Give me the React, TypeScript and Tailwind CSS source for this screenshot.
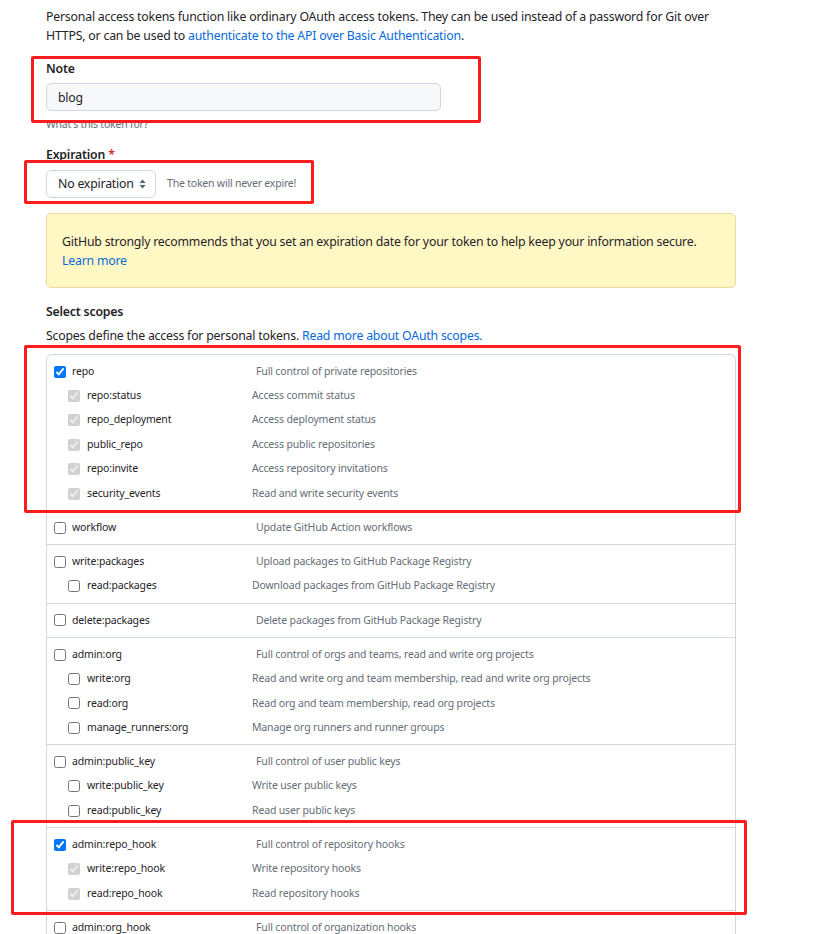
import React from 'react'

type Scope = { name: string; desc: string; checked?: boolean; subs?: { name: string; desc: string }[] }

const SCOPES: Scope[] = [
  {
    name: 'repo',
    desc: 'Full control of private repositories',
    checked: true,
    subs: [
      { name: 'repo:status', desc: 'Access commit status' },
      { name: 'repo_deployment', desc: 'Access deployment status' },
      { name: 'public_repo', desc: 'Access public repositories' },
      { name: 'repo:invite', desc: 'Access repository invitations' },
      { name: 'security_events', desc: 'Read and write security events' },
    ],
  },
  { name: 'workflow', desc: 'Update GitHub Action workflows' },
  {
    name: 'write:packages',
    desc: 'Upload packages to GitHub Package Registry',
    subs: [{ name: 'read:packages', desc: 'Download packages from GitHub Package Registry' }],
  },
  { name: 'delete:packages', desc: 'Delete packages from GitHub Package Registry' },
  {
    name: 'admin:org',
    desc: 'Full control of orgs and teams, read and write org projects',
    subs: [
      { name: 'write:org', desc: 'Read and write org and team membership, read and write org projects' },
      { name: 'read:org', desc: 'Read org and team membership, read org projects' },
      { name: 'manage_runners:org', desc: 'Manage org runners and runner groups' },
    ],
  },
  {
    name: 'admin:public_key',
    desc: 'Full control of user public keys',
    subs: [
      { name: 'write:public_key', desc: 'Write user public keys' },
      { name: 'read:public_key', desc: 'Read user public keys' },
    ],
  },
  {
    name: 'admin:repo_hook',
    desc: 'Full control of repository hooks',
    checked: true,
    subs: [
      { name: 'write:repo_hook', desc: 'Write repository hooks' },
      { name: 'read:repo_hook', desc: 'Read repository hooks' },
    ],
  },
  { name: 'admin:org_hook', desc: 'Full control of organization hooks' },
]

function ScopeGroup({ scope }: { scope: Scope }) {
  return (
    <div className="border-b border-[#d0d7de] py-[4.4px]">
      {/* parent scope */}
      <label className="flex h-[24.4px] items-center">
        <div className="flex w-[209px] shrink-0 items-center gap-[6px] pl-[7px]">
          <input type="checkbox" defaultChecked={scope.checked} className="m-0 h-[12px] w-[12px]" />
          <span className="text-[#1f2328]">{scope.name}</span>
        </div>
        <span className="text-[#656d76]">{scope.desc}</span>
      </label>

      {/* child scopes */}
      {scope.subs?.map((s) => (
        <label key={s.name} className="flex h-[24.4px] items-center">
          <div className="flex w-[205px] shrink-0 items-center gap-[7px] pl-[21px]">
            <input
              type="checkbox"
              defaultChecked={scope.checked}
              disabled={scope.checked}
              className="m-0 h-[12px] w-[12px]"
            />
            <span className="text-[#1f2328]">{s.name}</span>
          </div>
          <span className="text-[#656d76]">{s.desc}</span>
        </label>
      ))}
    </div>
  )
}

export default function App() {
  return (
    <div
      className="relative h-[934px] w-[828px] overflow-hidden bg-white pl-[46px] pt-[8px] text-[12.3px] tracking-[-0.2px] text-[#1f2328]"
      style={{ fontFamily: '"Noto Sans", "Open Sans", sans-serif' }}
    >
      <div className="w-[690px]">
        <p className="leading-[18.5px]">
          Personal access tokens function like ordinary OAuth access tokens. They can be used instead of a password for Git over
          HTTPS, or can be used to <a className="text-[#0969da]">authenticate to the API over Basic Authentication</a>.
        </p>

        {/* Note */}
        <div className="mt-[13.5px] font-semibold leading-[19px]">Note</div>
        <div className="mt-[5.5px] flex h-[28px] w-[395px] items-center rounded-[5px] border border-[#d0d7de] bg-[#f6f8fa] px-[11px] pt-[2px]">
          blog
        </div>
        <p className="mt-[5px] text-[10.5px] leading-[16px] text-[#656d76]">What's this token for?</p>

        {/* Expiration */}
        <div className="mt-[12.5px] font-semibold leading-[19px]">
          Expiration <span className="text-[#d1242f]">*</span>
        </div>
        <div className="mt-[6.5px] flex items-center gap-[11px]">
          <div className="flex h-[28px] w-[110px] items-center justify-between rounded-[5px] border border-[#d0d7de] bg-white pl-[11px] pr-[9px]">
            <span>No expiration</span>
            <svg width="7" height="10" viewBox="0 0 7 10" fill="#57606a">
              <path d="M3.5 0.5 L6.5 4 H0.5 Z" />
              <path d="M3.5 9.5 L6.5 6 H0.5 Z" />
            </svg>
          </div>
          <span className="text-[10.5px] text-[#656d76]">The token will never expire!</span>
        </div>

        {/* Warning flash */}
        <div className="mt-[15px] h-[75px] rounded-[5px] border border-[#eed9a0] bg-[#fff8c5] px-[15px] pt-[17.5px] leading-[19px]">
          <p>GitHub strongly recommends that you set an expiration date for your token to help keep your information secure.</p>
          <a className="text-[#0969da]">Learn more</a>
        </div>

        {/* Scopes */}
        <div className="mt-[13.5px] font-semibold leading-[19px]">Select scopes</div>
        <p className="mt-[5px] leading-[19px]">
          Scopes define the access for personal tokens. <a className="text-[#0969da]">Read more about OAuth scopes.</a>
        </p>

        <div className="mt-[9.5px] rounded-t-[6px] border-x border-t border-[#d0d7de] text-[10.5px] tracking-[-0.15px]">
          {SCOPES.map((s) => (
            <ScopeGroup key={s.name} scope={s} />
          ))}
        </div>
      </div>

      {/* red annotation frames */}
      <div className="absolute left-[31px] top-[56px] h-[67px] w-[450px] rounded-[2px] border-[3px] border-[#fb1d1d]" />
      <div className="absolute left-[24px] top-[160px] h-[44px] w-[290px] rounded-[2px] border-[3px] border-[#fb1d1d]" />
      <div className="absolute left-[24px] top-[345px] h-[168px] w-[717px] rounded-[2px] border-[3px] border-[#fb1d1d]" />
      <div className="absolute left-[11px] top-[820px] h-[95px] w-[736px] rounded-[2px] border-[3px] border-[#fb1d1d]" />
    </div>
  )
}
